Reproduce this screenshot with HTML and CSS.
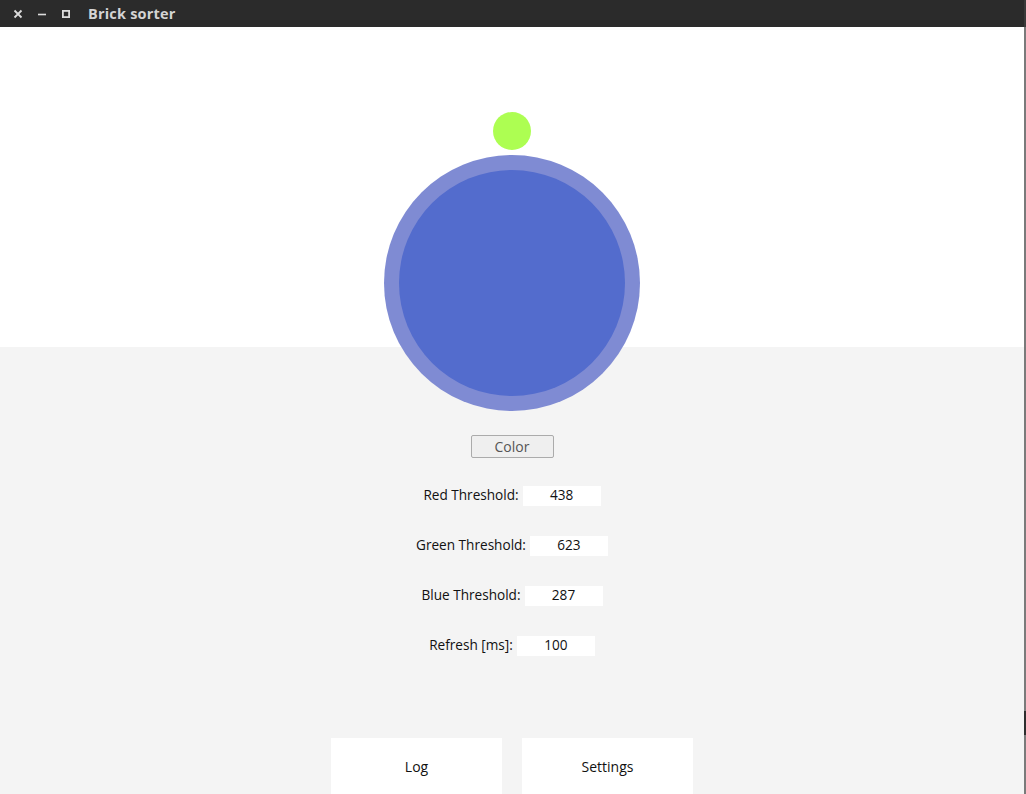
FILE: index.html
```html
<!DOCTYPE html>
<html>
<head>
<meta charset="utf-8">
<title>Brick sorter</title>
<link rel="stylesheet" href="styles.css">
</head>
<body>
<div class="frame">
  <div class="window">
    <div class="titlebar">
      <div class="controls">
        <svg class="ctl" width="10" height="10" viewBox="0 0 10 10"><path d="M1.5 1.5 L8.5 8.5 M8.5 1.5 L1.5 8.5" stroke="#dcdcdc" stroke-width="1.8"/></svg>
        <svg class="ctl" width="10" height="10" viewBox="0 0 10 10"><path d="M1 5.5 H9" stroke="#dcdcdc" stroke-width="1.6"/></svg>
        <svg class="ctl" width="10" height="10" viewBox="0 0 10 10"><rect x="1.9" y="1.9" width="6.2" height="6.2" fill="none" stroke="#dcdcdc" stroke-width="1.8"/></svg>
      </div>
      <span class="title">Brick sorter</span>
    </div>
    <div class="content">
      <div class="dot"></div>
      <div class="ring"><div class="core"></div></div>
      <button class="color-btn">Color</button>
      <div class="fields">
        <div class="row"><span class="lbl">Red Threshold:</span><span class="val">438</span></div>
        <div class="row"><span class="lbl">Green Threshold:</span><span class="val">623</span></div>
        <div class="row"><span class="lbl">Blue Threshold:</span><span class="val">287</span></div>
        <div class="row"><span class="lbl">Refresh [ms]:</span><span class="val">100</span></div>
      </div>
      <div class="actions">
        <div class="action">Log</div>
        <div class="action">Settings</div>
      </div>
    </div>
  </div>
  <div class="edge"><div class="edge-top"></div><div class="edge-mark"></div><div class="edge-rest"></div></div>
</div>
</body>
</html>
```
FILE: styles.css
```css
html, body {
  margin: 0;
  padding: 0;
  height: 794px;
  overflow: hidden;
  background: #f4f4f4;
}
.frame {
  display: flex;
  width: 1026px;
  height: 794px;
}
.window {
  width: 1024px;
  display: flex;
  flex-direction: column;
  font-family: "Open Sans", "DejaVu Sans", sans-serif;
}
.edge {
  width: 2px;
  display: flex;
  flex-direction: column;
  background: #7a7a7a;
}
.edge-top { height: 27px; background: #3a3a3a; }
.edge-mark { margin-top: 684px; height: 24px; background: #2e2e2e; }
.edge-rest { flex: 1; }
.titlebar {
  height: 27px;
  background: #2b2b2b;
  display: flex;
  align-items: center;
}
.controls {
  display: flex;
  align-items: center;
  gap: 14px;
  padding-left: 13px;
}
.ctl { display: block; }
.title {
  margin-left: 17px;
  color: #d4d4d4;
  font-weight: bold;
  font-size: 14.5px;
  letter-spacing: 0.2px;
}
.content {
  flex: 1;
  display: flex;
  flex-direction: column;
  align-items: center;
  background: linear-gradient(#ffffff 0, #ffffff 320px, #f4f4f4 320px);
}
.dot {
  margin-top: 85px;
  width: 38px;
  height: 38px;
  border-radius: 50%;
  background: #adfe52;
}
.ring {
  margin-top: 5px;
  width: 256px;
  height: 256px;
  border-radius: 50%;
  background: #7f8bd3;
  display: flex;
  align-items: center;
  justify-content: center;
}
.core {
  width: 226px;
  height: 226px;
  border-radius: 50%;
  background: #536ccd;
}
.color-btn {
  margin-top: 24px;
  width: 83px;
  height: 23px;
  border: 1px solid #ababab;
  border-radius: 2px;
  background: #efefef;
  color: #555555;
  font-family: "Open Sans", "DejaVu Sans", sans-serif;
  font-size: 14px;
  padding: 0;
}
.fields {
  margin-top: 28px;
  display: flex;
  flex-direction: column;
  gap: 30px;
  align-items: center;
}
.row {
  display: flex;
  align-items: flex-start;
  gap: 4px;
  height: 20px;
  font-size: 13.6px;
  line-height: 17px;
  color: #111111;
}
.val {
  width: 78px;
  height: 20px;
  background: #ffffff;
  text-align: center;
}
.actions {
  margin-top: auto;
  display: flex;
  gap: 20px;
  height: 56px;
}
.action {
  width: 171px;
  background: #ffffff;
  font-size: 14px;
  color: #111111;
  text-align: center;
  padding-top: 19px;
  box-sizing: border-box;
}
```
